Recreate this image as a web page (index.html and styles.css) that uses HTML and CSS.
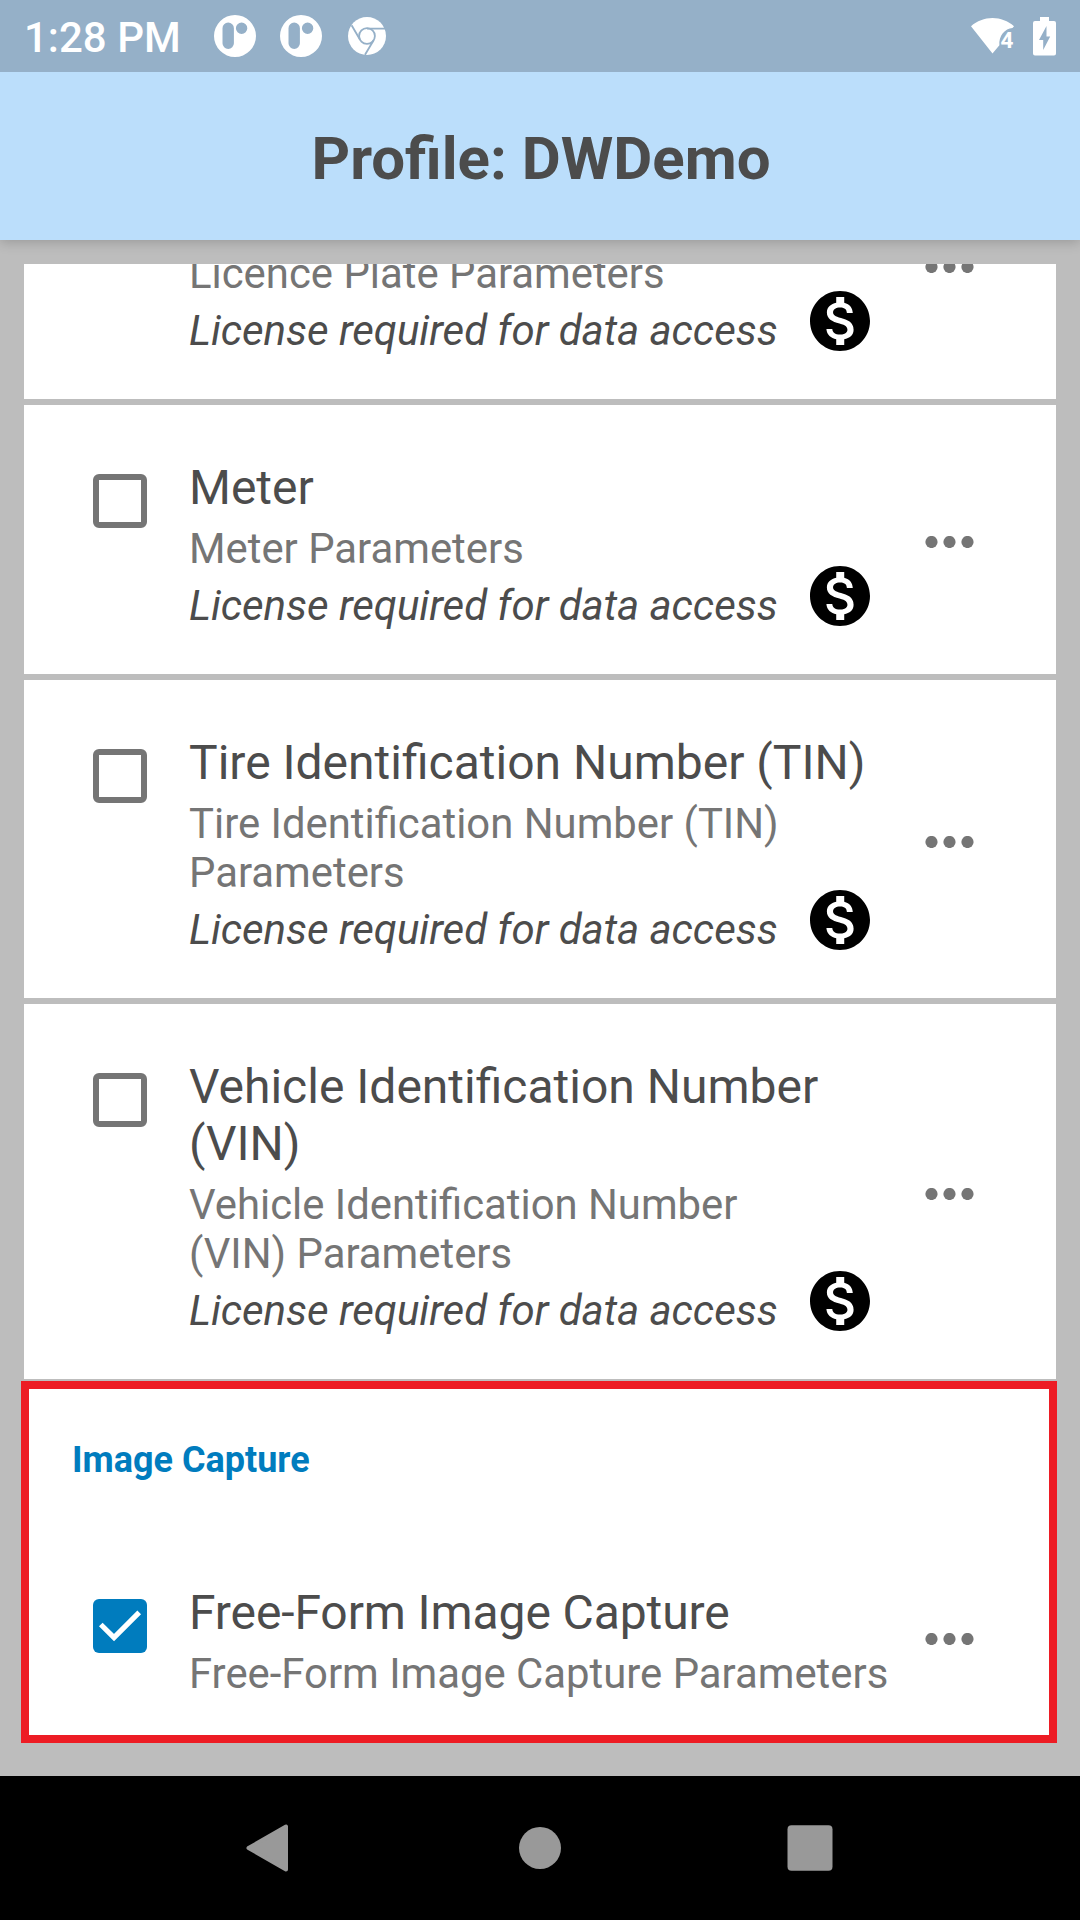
FILE: index.html
```html
<!DOCTYPE html>
<html lang="en">
<head>
<meta charset="utf-8">
<title>Profile: DWDemo</title>
<link rel="stylesheet" href="styles.css">
</head>
<body>
<svg class="defs" aria-hidden="true">
  <symbol id="paid" viewBox="0 0 24 24"><path d="M12 2C6.48 2 2 6.48 2 12s4.48 10 10 10 10-4.48 10-10S17.52 2 12 2zm1.41 16.09V20h-2.67v-1.93c-1.71-.36-3.16-1.46-3.27-3.4h1.96c.1 1.05.82 1.87 2.65 1.87 1.96 0 2.4-.98 2.4-1.59 0-.83-.44-1.61-2.67-2.14-2.48-.6-4.18-1.62-4.18-3.67 0-1.72 1.39-2.84 3.11-3.21V4h2.67v1.95c1.86.45 2.79 1.86 2.85 3.39H14.3c-.05-1.11-.64-1.87-2.22-1.87-1.5 0-2.4.68-2.4 1.64 0 .84.65 1.39 2.67 1.91s4.18 1.39 4.18 3.91c-.01 1.83-1.38 2.83-3.12 3.16z"/></symbol>
  <symbol id="more" viewBox="0 0 50 12"><circle cx="7.500" cy="6" r="6.1"/><circle cx="25.500" cy="6" r="6.1"/><circle cx="43.500" cy="6" r="6.1"/></symbol>
  <symbol id="notif" viewBox="0 0 42 42"><path fill="#fff" fill-rule="evenodd" d="M21 0a21 21 0 1 0 0 42a21 21 0 1 0 0-42zM14.2 7.6a5.7 5.7 0 0 1 5.7 5.7v15a5.7 5.7 0 0 1-11.4 0v-15a5.7 5.7 0 0 1 5.7-5.7zM27.6 7.6a5.7 5.7 0 1 1 0 11.4a5.7 5.7 0 1 1 0-11.4z"/></symbol>
</svg>
<div class="screen">
  <div class="status">
    <span class="time">1:28 PM</span>
    <div class="notifs">
      <svg width="42" height="42"><use href="#notif"/></svg>
      <svg width="42" height="42"><use href="#notif"/></svg>
      <svg width="38" height="38" viewBox="0 0 38 38">
        <circle cx="19" cy="19" r="19" fill="#fff"/>
        <g fill="none" stroke="#95b0c8" stroke-width="1.8"><circle cx="19" cy="19" r="7.9"/><path d="M19 11.6H37M12.2 23L3.6 8.3M25.8 23L17 37.8"/></g>
      </svg>
    </div>
    <div class="system">
      <svg width="46" height="40" viewBox="0 0 46 40">
        <path fill="#fff" d="M0 10.2C6 5 13.500 2 21.500 2S37 5 43 10.200L41.500 12C34 12.500 27.500 20 28.400 29.300L21.500 37.500z"/>
        <text x="29.500" y="32" class="wifi-level">4</text>
      </svg>
      <svg width="23" height="39" viewBox="0 0 23 39"><path fill="#fff" fill-rule="evenodd" d="M7 0H16V4H21Q23 4 23 6V36.500Q23 38.500 21 38.500H2Q0 38.500 0 36.500V6Q0 4 2 4H7zM13.500 9L6 23H10.200V33L17.200 19.500H13.500z"/></svg>
    </div>
  </div>
  <header class="header"><h1>Profile: DWDemo</h1></header>
  <main class="content">
    <div class="viewport">
      <article class="card scrolled">
        <span class="check"></span>
        <div class="text">
          <h2></h2>
          <p class="params">Licence Plate Parameters</p>
          <div class="license"><em>License required for data access</em><svg class="paid"><use href="#paid"/></svg></div>
        </div>
        <svg class="more"><use href="#more"/></svg>
      </article>
      <article class="card">
        <span class="check"></span>
        <div class="text">
          <h2>Meter</h2>
          <p class="params">Meter Parameters</p>
          <div class="license"><em>License required for data access</em><svg class="paid"><use href="#paid"/></svg></div>
        </div>
        <svg class="more"><use href="#more"/></svg>
      </article>
      <article class="card">
        <span class="check"></span>
        <div class="text">
          <h2>Tire Identification Number (TIN)</h2>
          <p class="params">Tire Identification Number (TIN) Parameters</p>
          <div class="license"><em>License required for data access</em><svg class="paid"><use href="#paid"/></svg></div>
        </div>
        <svg class="more"><use href="#more"/></svg>
      </article>
      <article class="card">
        <span class="check"></span>
        <div class="text">
          <h2>Vehicle Identification Number (VIN)</h2>
          <p class="params">Vehicle Identification Number (VIN) Parameters</p>
          <div class="license"><em>License required for data access</em><svg class="paid"><use href="#paid"/></svg></div>
        </div>
        <svg class="more"><use href="#more"/></svg>
      </article>
    </div>
    <section class="highlight">
      <h3>Image Capture</h3>
      <div class="row">
        <span class="check checked"><svg width="54" height="54" viewBox="0 0 54 54"><path d="M7.800 25.500L21 38.500L46.200 13.300" fill="none" stroke="#fff" stroke-width="5.200"/></svg></span>
        <div class="text">
          <h2 class="tight">Free-Form Image Capture</h2>
          <p class="params wide">Free-Form Image Capture Parameters</p>
        </div>
        <svg class="more"><use href="#more"/></svg>
      </div>
    </section>
  </main>
  <nav class="navbar">
    <svg width="48" height="48" viewBox="0 0 48 48"><path d="M2.500 24L40 2.500V45.500z" stroke-width="4" stroke-linejoin="round"/></svg>
    <svg width="48" height="48" viewBox="0 0 48 48"><circle cx="24" cy="24" r="21"/></svg>
    <svg width="48" height="48" viewBox="0 0 48 48"><rect x="1.500" y="1.300" width="45" height="45.400" rx="4" stroke="none"/></svg>
  </nav>
</div>
</body>
</html>
```
FILE: styles.css
```css
* { box-sizing: border-box; }
body, h1, h2, h3, p { margin: 0; }
body { font-family: Roboto, sans-serif; color: #4c4c4c; }
svg { display: block; flex: none; }
.defs { display: none; }
.screen { width: 1080px; height: 1920px; display: flex; flex-direction: column; overflow: hidden; background: #bdbdbd; }

.status { height: 72px; flex: none; background: #95b0c8; display: flex; align-items: center; padding: 0 24px; z-index: 1; }
.time { width: 190px; font-size: 42px; font-weight: 500; line-height: 48px; color: #fff; padding-top: 4px; white-space: nowrap; }
.notifs { display: flex; align-items: center; gap: 24px; }
.notifs svg:last-child { margin-left: 2px; }
.system { margin-left: auto; display: flex; align-items: center; gap: 16px; }
.wifi-level { font: 700 22.5px Roboto, sans-serif; fill: #fff; }

.header { height: 168px; flex: none; background: #bbdefb; display: flex; justify-content: center; padding: 52px 0 0 2px; box-shadow: 0 2px 12px rgba(0, 0, 0, .2); }
.header h1 { font-size: 60px; line-height: 70px; font-weight: 700; }

.content { height: 1536px; flex: none; padding: 24px 24px 0; }
.viewport { height: 1115px; overflow: hidden; display: flex; flex-direction: column; gap: 6px; }
.card, .row { display: flex; align-items: flex-start; }
.card { background: #fff; padding: 54px 0 44px 69px; flex: none; }
.scrolled { margin-top: -134px; }
.check { width: 54px; height: 54px; flex: none; margin-top: 15px; border: 6px solid #757575; border-radius: 6px; }
.checked { border: 0; background: #007cbe; }
.text { width: 702px; margin-left: 42px; flex: none; }
.text h2 { min-height: 57px; font-size: 48px; line-height: 57px; font-weight: 400; }
.text .tight { letter-spacing: -.1px; }
.params { width: 600px; margin-top: 8px; font-size: 41.85px; line-height: 49px; color: #757575; }
.params.wide { width: auto; white-space: nowrap; }
.license { height: 49px; margin-top: 8px; display: flex; }
.license em { width: 615px; font-size: 42px; line-height: 49px; letter-spacing: -.04px; white-space: nowrap; }
.paid { width: 72px; height: 72px; margin-top: -21px; }
.more { width: 50px; height: 12px; align-self: center; margin: 0 0 4px 33px; fill: #757575; }
.card .more { margin-bottom: 5px; }

.highlight { height: 362px; margin: 2px -1px 0 -3px; border: 8px solid #ed1c24; background: #fff; padding: 50px 0 0 43px; }
.highlight h3 { font-size: 36px; line-height: 42px; font-weight: 700; color: #007cbe; }
.row { margin: 103px 0 0 21px; }

.navbar { height: 144px; flex: none; background: #000; display: flex; justify-content: center; align-items: center; gap: 222px; }
.navbar svg { fill: #999; stroke: #999; stroke-width: 0; }
```
